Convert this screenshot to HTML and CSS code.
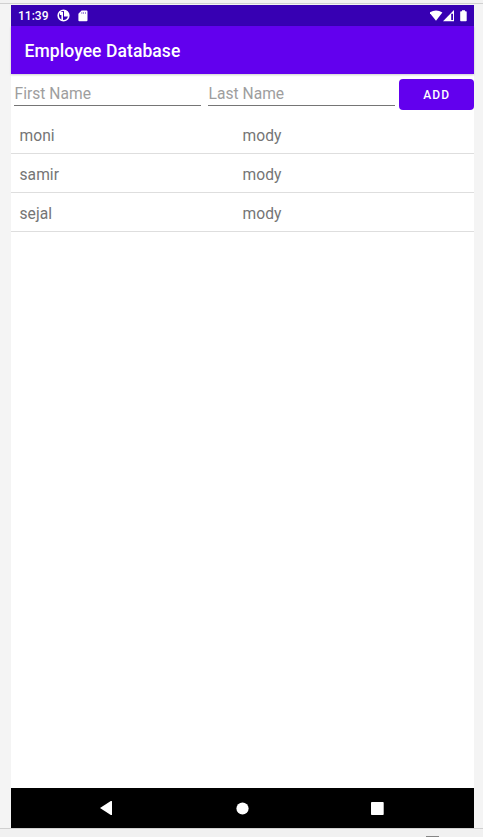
FILE: index.html
```html
<!DOCTYPE html>
<html lang="en">
<head>
<meta charset="utf-8">
<title>Employee Database</title>
<link rel="stylesheet" href="styles.css">
</head>
<body>
<div class="window">
  <div class="window-top"></div>
  <main class="device">
    <div class="status">
      <span class="clock">11:39</span>
      <svg class="ic-app" width="13" height="13" viewBox="0 0 13 13"><circle cx="6.5" cy="6.5" r="5.3" fill="none" stroke="#fff" stroke-width="1.6"/><path d="M3 3H6V11.9H4.4V6H3ZM7 1Q12 1.8 11.9 7.6H7Z" fill="#fff"/></svg>
      <svg class="ic-card" width="10" height="12" viewBox="0 0 10 12"><path fill="#fff" fill-rule="evenodd" d="M3.6 .5H8.6Q9.5 .5 9.5 1.4V10.3Q9.5 11.3 8.5 11.3H1.3Q.4 11.3 .4 10.3V3.7ZM3.6 2.2V3.8H4.2V2.2ZM5.4 2.2V3.8H6V2.2ZM7.2 2.2V3.8H7.8V2.2Z"/></svg>
      <span class="spacer"></span>
      <svg width="38" height="12" viewBox="0 0 38 12"><path fill="#fff" d="M-.5 2.6Q6-1.8 12.4 2.6L6 10.8Z"/><path fill="#fff" d="M24 0V11.3H13Z"/><path fill="#3700b3" d="M21.2 3.8H23V10H21.2Z"/><path fill="#fff" d="M32 .2H35V1.2H36Q36.7 1.2 36.7 2V10.5Q36.7 11.3 36 11.3H30.9Q30.2 11.3 30.2 10.5V2Q30.2 1.2 30.9 1.2H32Z"/></svg>
    </div>
    <header class="appbar">Employee Database</header>
    <div class="content">
      <form class="entry">
        <input class="field" type="text" placeholder="First Name" aria-label="First Name">
        <input class="field" type="text" placeholder="Last Name" aria-label="Last Name">
        <button class="add" type="button">ADD</button>
      </form>
      <div class="row"><span>moni</span><span>mody</span></div>
      <div class="row"><span>samir</span><span>mody</span></div>
      <div class="row"><span>sejal</span><span>mody</span></div>
    </div>
    <nav class="navbar">
      <svg width="13" height="14" viewBox="0 0 13 14"><path fill="#fff" d="M0 7 10.8 0Q12-.3 12 .6V13.4Q12 14.3 10.8 14Z"/></svg>
      <svg width="13" height="13" viewBox="0 0 13 13"><circle cx="6.5" cy="6.5" r="6.1" fill="#fff"/></svg>
      <svg width="13" height="13" viewBox="0 0 13 13"><rect width="12.7" height="13" rx=".8" fill="#fff"/></svg>
    </nav>
  </main>
  <footer class="window-bottom"><span class="handle"></span></footer>
</div>
</body>
</html>
```
FILE: styles.css
```css
* { box-sizing: border-box; }
body { margin: 0; background: #f4f4f4; font-family: Roboto, sans-serif; }
.window { height: 837px; display: flex; flex-direction: column; overflow: hidden; }
.window-top { height: 5px; background: linear-gradient(#f2f2f2 3px, #d0d0d0 3px, #d0d0d0 4px, #f4f4f4 4px); }
.device { width: 463px; height: 823px; margin-left: 11px; background: #fff; display: flex; flex-direction: column; }
.status { height: 21px; padding: 0 6px 0 7px; background: #3700b3; color: #fff; display: flex; align-items: center; }
.clock { font-size: 12px; font-weight: 500; line-height: 21px; width: 39px; padding-top: 1px; }
.ic-card { margin-left: 8px; }
.spacer { flex: 1; }
.appbar { height: 48px; padding-left: 13.5px; background: #6200ee; color: #fff; font-size: 17.5px; font-weight: 500; line-height: 50px; letter-spacing: .08px; box-shadow: 0 1px 2px #0003; }
.content { flex: 1; }
.entry { height: 41px; padding: 5px 0 0 3px; display: flex; }
.field { width: 187px; height: 27px; margin-right: 7px; padding: 4px 0 0 .5px; border: 0; border-bottom: 1px solid #757575; border-radius: 0; background: transparent; color: #212121; font: 400 15.6px Roboto, sans-serif; letter-spacing: .02px; outline: 0; }
.field::placeholder { color: #9e9e9e; opacity: 1; }
.field:nth-child(2) { margin-right: 3.5px; }
.add { flex: 1; height: 31px; padding: 1px 0 0 1px; border: 0; border-radius: 4px; background: #6200ee; color: #fff; font: 500 12px Roboto, sans-serif; letter-spacing: 1.2px; }
.row { height: 39px; padding-left: 8.5px; display: grid; grid-template-columns: 223px 1fr; border-bottom: 1px solid #dedede; color: #757575; font-size: 15.6px; line-height: 42px; letter-spacing: .05px; }
.navbar { height: 40px; padding: 0 90px 0 89px; background: #000; display: flex; align-items: center; justify-content: space-between; }
.window-bottom { height: 9px; border-top: 1px solid #d0d0d0; background: #f1f1f1; display: flex; align-items: flex-end; }
.handle { width: 13px; height: 1px; margin-left: 426px; background: #858585; }
```
